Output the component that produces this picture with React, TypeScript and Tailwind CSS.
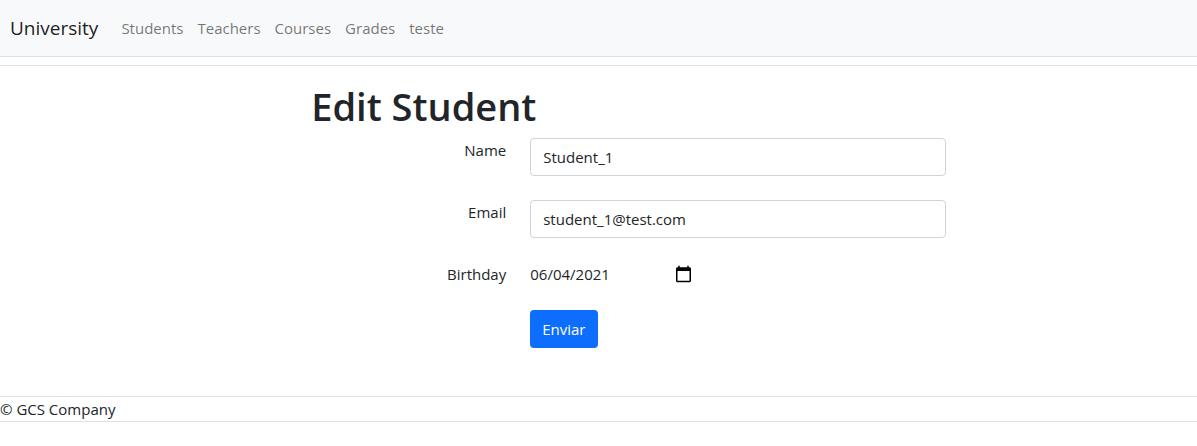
import React from "react";

const links = ["Students", "Teachers", "Courses", "Grades", "teste"];

type FieldProps = { id: string; label: string; children: React.ReactNode };

function Field({ id, label, children }: FieldProps) {
  return (
    <div className="grid grid-cols-[195px_1fr] items-start gap-x-6">
      <label htmlFor={id} className="text-right">
        {label}
      </label>
      {children}
    </div>
  );
}

const inputClass =
  "h-[38px] w-full rounded-sm border border-[#ced4da] bg-white px-3 outline-none focus:border-[#86b7fe]";

export default function App() {
  return (
    <div className="bg-white font-['Open_Sans','Noto_Sans',sans-serif] text-[15px] leading-6 text-[#212529]">
      <nav className="flex h-14 items-center bg-[#f8f9fa] px-[10px]">
        <a href="#" className="mr-4 text-[19px] text-black/90">
          University
        </a>
        <ul className="flex">
          {links.map((link) => (
            <li key={link}>
              <a href="#" className="block px-[7px] py-2 text-black/55">
                {link}
              </a>
            </li>
          ))}
        </ul>
      </nav>
      <div className="h-[10px] border-y border-[#dee2e6]" />

      <main className="mt-4 mb-12 pr-[21%] pl-[26%]">
        <h1 className="mb-2 text-[38px] leading-[48px] font-semibold">Edit Student</h1>
        <form className="flex flex-col gap-6" onSubmit={(e) => e.preventDefault()}>
          <Field id="name" label="Name">
            <input id="name" type="text" defaultValue="Student_1" className={inputClass} />
          </Field>
          <Field id="email" label="Email">
            <input id="email" type="email" defaultValue="student_1@test.com" className={inputClass} />
          </Field>
          <Field id="birthday" label="Birthday">
            <input
              id="birthday"
              type="date"
              defaultValue="2021-06-04"
              className="h-6 w-[163px] outline-none [&::-webkit-calendar-picker-indicator]:h-[19px] [&::-webkit-calendar-picker-indicator]:w-[19px] [&::-webkit-calendar-picker-indicator]:bg-contain [&::-webkit-calendar-picker-indicator]:p-0 [&::-webkit-datetime-edit-day-field]:p-0 [&::-webkit-datetime-edit-month-field]:p-0 [&::-webkit-datetime-edit-year-field]:p-0"
            />
          </Field>
          <div className="grid grid-cols-[195px_1fr] gap-x-6">
            <button
              type="submit"
              className="col-start-2 h-[38px] justify-self-start rounded-sm bg-[#0d6efd] px-3 text-white"
            >
              Enviar
            </button>
          </div>
        </form>
      </main>

      <footer className="border-y border-[#dee2e6]">© GCS Company</footer>
    </div>
  );
}
